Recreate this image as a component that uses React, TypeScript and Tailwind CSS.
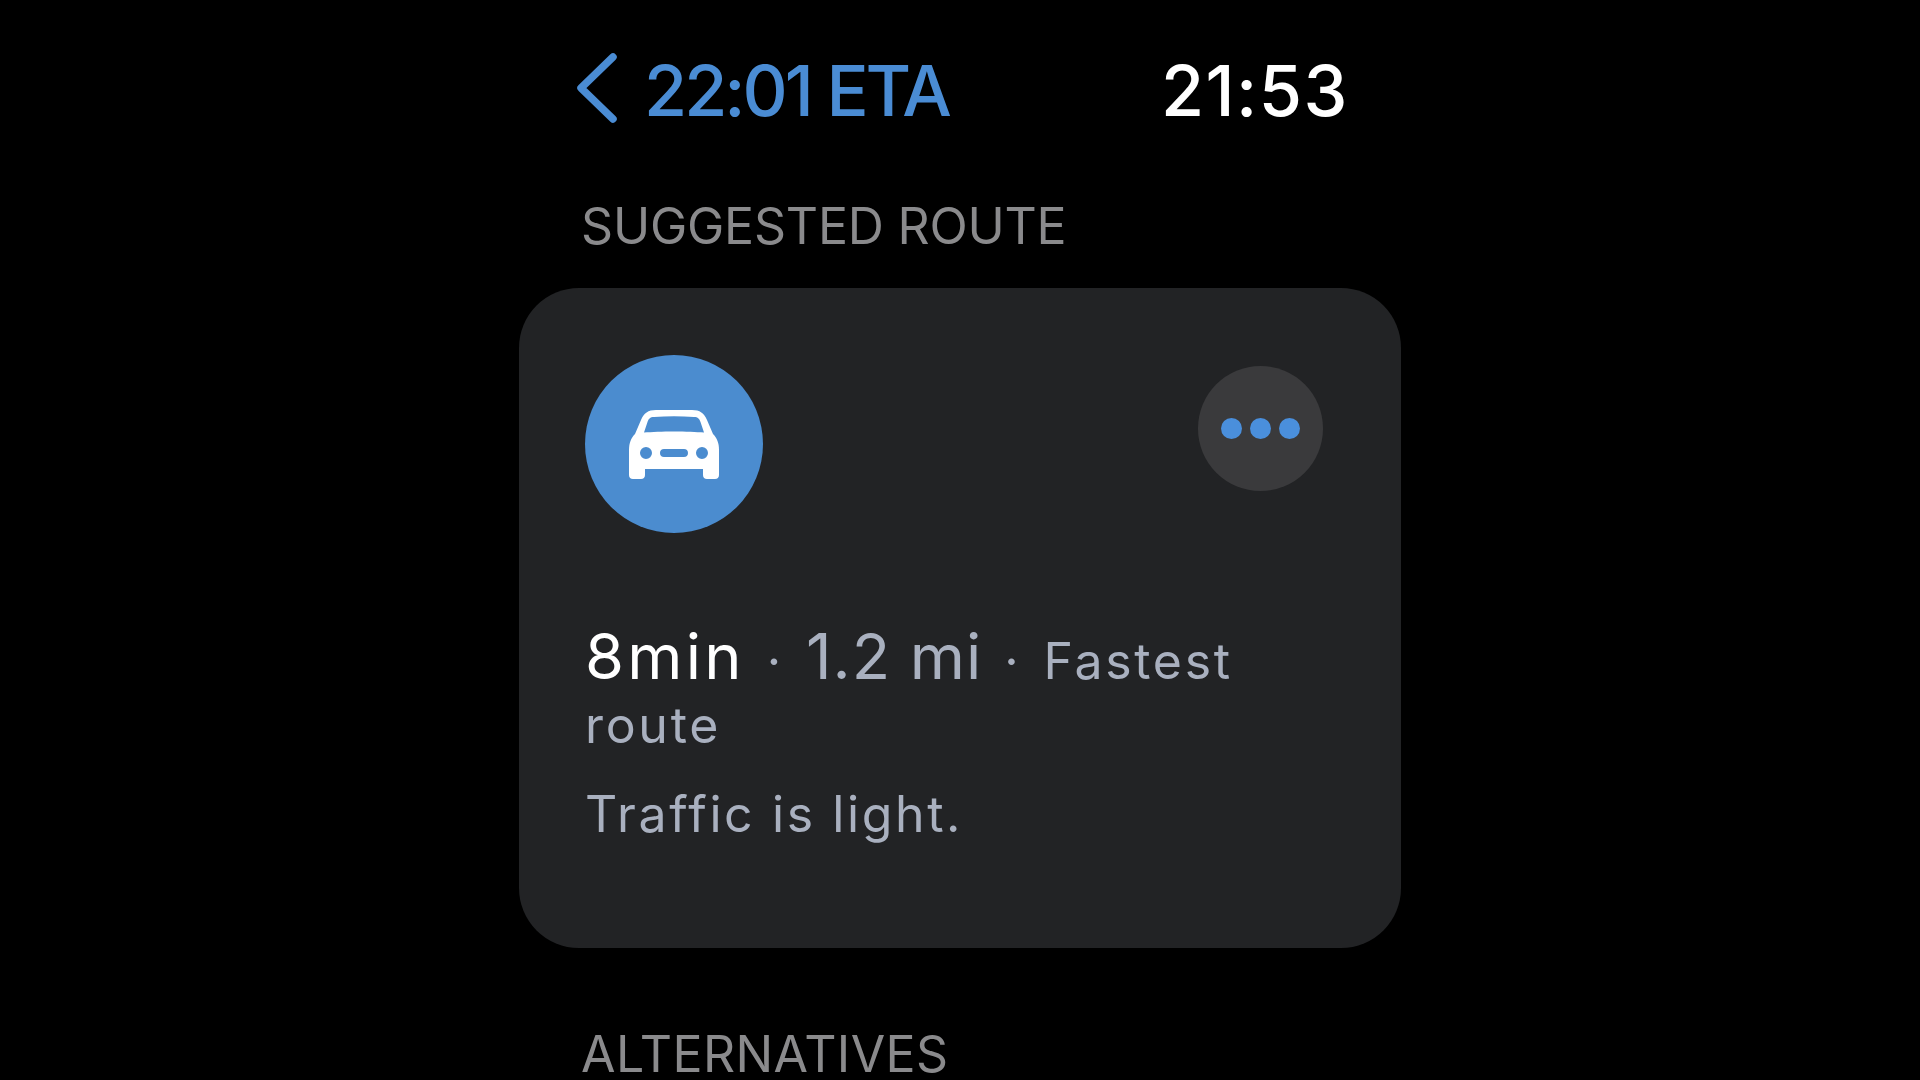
const font = { fontFamily: 'Inter, "Noto Sans", sans-serif' }

function Chevron() {
  return (
    <svg width="41" height="70" viewBox="0 0 41 70" fill="none" className="shrink-0">
      <path d="M37 4 L5 35 L37 66" stroke="#4a8cd4" strokeWidth="7.5" strokeLinecap="round" strokeLinejoin="round" />
    </svg>
  )
}

function Car() {
  return (
    <svg width="90" height="69" viewBox="0 0 90 69">
      <path
        fillRule="evenodd"
        fill="#ffffff"
        d="M27 0 H63 C71 0 75 3 78 10 L84 24 C88 28 90 33 90 40 V65 C90 67.5 88.500 69 86 69 H78 C75.5 69 74 67.5 74 65 V59 H16 V65 C16 67.5 14.5 69 12 69 H4 C1.500 69 0 67.5 0 65 V40 C0 33 2 28 6 24 L12 10 C15 3 19 0 27 0 Z M25 7 C21 7 19.500 9 18.500 12 L15 22.500 C30 21 60 21 75 22.500 L71.500 12 C70.500 9 69 7 65 7 C52 6 38 6 25 7 Z M17 37 A6 6 0 1 0 17 49 A6 6 0 1 0 17 37 Z M73 37 A6 6 0 1 0 73 49 A6 6 0 1 0 73 37 Z M35 39 C32.500 39 31 40.500 31 43 C31 45.500 32.500 47 35 47 H55 C57.500 47 59 45.500 59 43 C59 40.500 57.500 39 55 39 Z"
      />
    </svg>
  )
}

export default function App() {
  return (
    <div className="h-screen overflow-hidden bg-black" style={font}>
      <div className="mx-auto w-[882px]">
        <header className="flex h-[196px] items-start justify-between pl-[57px] pr-[52px] pt-[50px]">
          <div className="flex items-center gap-[27px] text-[#4a8cd4]">
            <Chevron />
            <span className="text-[70px] font-medium leading-[70px] tracking-[-3px] whitespace-nowrap pt-[6px]">22:01 ETA</span>
          </div>
          <span className="text-[70px] font-medium leading-[70px] tracking-[1.5px] text-white pt-[6px]">21:53</span>
        </header>

        <h2 className="pl-[62px] text-[50px] leading-[60px] tracking-[-0.2px] text-[#8a8a8c]">SUGGESTED ROUTE</h2>

        <section className="mt-[32px] h-[660px] rounded-[60px] bg-[#222325] px-[66px] pt-[67px]">
          <div className="flex items-start justify-between">
            <div className="flex h-[178px] w-[178px] items-center justify-center rounded-full bg-[#4b8ccf]">
              <Car />
            </div>
            <button className="mr-[12px] mt-[11px] flex h-[125px] w-[125px] items-center justify-center rounded-full bg-[#3a3a3c]">
              <span className="flex gap-[8px]">
                <span className="h-[21px] w-[21px] rounded-full bg-[#4a8fdc]" />
                <span className="h-[21px] w-[21px] rounded-full bg-[#4a8fdc]" />
                <span className="h-[21px] w-[21px] rounded-full bg-[#4a8fdc]" />
              </span>
            </button>
          </div>

          <p className="mt-[91px] text-[50px] leading-[64px] tracking-[2.7px] text-[#a9b0bf]">
            <span className="text-[63px] text-white tracking-[3.3px]">8min</span>
            <span className="mx-[22px]">·</span>
            <span className="text-[63px] tracking-[1px]">1.2 mi</span>
            <span className="mx-[22px]">·</span>
            Fastest route
          </p>
          <p className="mt-[25px] text-[50px] leading-[64px] tracking-[2.6px] text-[#a9b0bf]">Traffic is light.</p>
        </section>

        <h2 className="mt-[76px] pl-[62px] text-[50px] leading-[60px] tracking-[0.4px] text-[#8a8a8c]">ALTERNATIVES</h2>
      </div>
    </div>
  )
}
